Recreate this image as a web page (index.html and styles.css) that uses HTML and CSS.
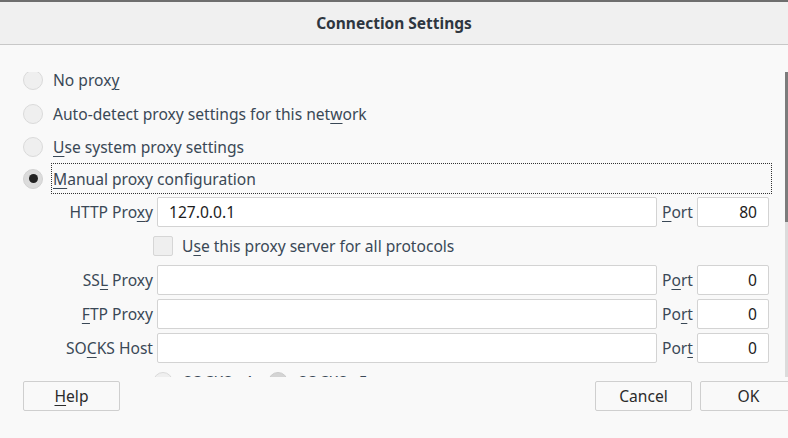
FILE: index.html
```html
<!DOCTYPE html>
<html>
<head>
<meta charset="utf-8">
<link rel="stylesheet" href="styles.css">
</head>
<body>
<div class="dialog">
  <header class="titlebar">Connection Settings</header>
  <div class="body">
    <div class="viewport">
      <div class="inner">
        <div class="radio-row r1"><span class="radio"></span><span class="lbl">No prox<u>y</u></span></div>
        <div class="radio-row r2"><span class="radio"></span><span class="lbl">Auto-detect proxy settings for this net<u>w</u>ork</span></div>
        <div class="radio-row r3"><span class="radio"></span><span class="lbl"><u>U</u>se system proxy settings</span></div>
        <div class="radio-row r4"><span class="radio checked"></span><span class="lbl focus"><u>M</u>anual proxy configuration</span></div>

        <div class="proxies">
          <div class="prow">
            <span class="plabel">HTTP Pro<u>x</u>y</span>
            <span class="field">127.0.0.1</span>
            <span class="portlbl"><u>P</u>ort</span>
            <span class="field port">80</span>
          </div>
          <div class="check-row">
            <span class="checkbox"></span>
            <span class="lbl">U<u>s</u>e this proxy server for all protocols</span>
          </div>
          <div class="prow">
            <span class="plabel">SS<u>L</u> Proxy</span>
            <span class="field"></span>
            <span class="portlbl">P<u>o</u>rt</span>
            <span class="field port">0</span>
          </div>
          <div class="prow">
            <span class="plabel"><u>F</u>TP Proxy</span>
            <span class="field"></span>
            <span class="portlbl">Po<u>r</u>t</span>
            <span class="field port">0</span>
          </div>
          <div class="prow">
            <span class="plabel">SO<u>C</u>KS Host</span>
            <span class="field"></span>
            <span class="portlbl">Por<u>t</u></span>
            <span class="field port">0</span>
          </div>
          <div class="socks-row">
            <span class="radio small"></span><span class="lbl">SOCKS v<u>4</u></span>
            <span class="radio small dark"></span><span class="lbl">SOCKS <u>v</u>5</span>
          </div>
        </div>
      </div>
      <div class="scrollbar"><div class="thumb"></div></div>
    </div>
    <div class="buttons">
      <button class="btn"><u>H</u>elp</button>
      <div class="right">
        <button class="btn">Cancel</button>
        <button class="btn">OK</button>
      </div>
    </div>
  </div>
</div>
</body>
</html>
```
FILE: styles.css
```css
html, body {
  margin: 0;
  padding: 0;
  width: 788px;
  height: 438px;
  overflow: hidden;
  background: #f9f9f9;
}
body {
  font-family: "Noto Sans", "DejaVu Sans", sans-serif;
  font-size: 15.6px;
  color: #3a4856;
}
u {
  text-decoration-thickness: 1px;
  text-underline-offset: 3px;
}
.dialog {
  width: 788px;
  height: 438px;
}
.titlebar {
  height: 42px;
  border-top: 2px solid #6e6e6e;
  border-bottom: 1px solid #c8c8c8;
  background: #f0f0f0;
  display: flex;
  align-items: center;
  justify-content: center;
  font-weight: bold;
  font-size: 15.5px;
  color: #2e3640;
}
.body {
  padding-top: 27px;
}
.viewport {
  position: relative;
  height: 305px;
  overflow: hidden;
}
.inner {
  margin-top: -9px;
}
.radio-row {
  display: flex;
  align-items: center;
  padding-left: 23px;
}
.r1 { height: 34px; }
.r2 { height: 33px; }
.r3 { height: 33px; }
.r4 { height: 31px; }
.radio {
  width: 18px;
  height: 18px;
  border-radius: 50%;
  border: 1px solid #dadada;
  background: #efefef;
  flex: none;
  margin-right: 10px;
  display: flex;
  align-items: center;
  justify-content: center;
}
.radio.checked {
  background: #dcdcdc;
  border-color: #d2d2d2;
}
.radio.checked::after {
  content: "";
  width: 9px;
  height: 9px;
  border-radius: 50%;
  background: #222;
}
.radio-row .lbl {
  white-space: nowrap;
  line-height: 16px;
}
.lbl.focus {
  flex: 1;
  margin-left: -2px;
  margin-right: 16px;
  height: 29px;
  border: 1px dotted #333;
  padding-left: 1px;
  display: flex;
  align-items: center;
}
.proxies {
  margin-top: 3px;
  display: flex;
  flex-direction: column;
  gap: 4px;
}
.prow {
  display: flex;
  align-items: center;
  padding-left: 53px;
  height: 30px;
}
.plabel {
  width: 100px;
  text-align: right;
  margin-right: 4px;
  white-space: nowrap;
}
.field {
  box-sizing: border-box;
  width: 500px;
  height: 30px;
  border: 1px solid #d3d3d3;
  border-radius: 2px;
  background: #fff;
  color: #1c1c1c;
  padding: 0 11px;
  display: flex;
  align-items: center;
}
.portlbl {
  width: 35px;
  margin-left: 5px;
  white-space: nowrap;
}
.field.port {
  width: 72px;
  justify-content: flex-end;
}
.check-row {
  display: flex;
  align-items: center;
  height: 20px;
  margin: 5px 0;
  padding-left: 153px;
}
.checkbox {
  box-sizing: border-box;
  width: 20px;
  height: 20px;
  border: 1px solid #d6d6d6;
  border-radius: 2px;
  background: #efefef;
  margin-right: 9px;
}
.socks-row {
  display: flex;
  align-items: center;
  height: 20px;
  margin-top: 5px;
  padding-left: 153px;
}
.radio.small {
  margin-right: 10px;
}
.radio.dark {
  background: #d4d4d4;
  border-color: #cccccc;
}
.socks-row .lbl {
  width: 85px;
}
.scrollbar {
  position: absolute;
  right: 0;
  top: 0;
  width: 3px;
  height: 100%;
  background: #dcdcdc;
}
.thumb {
  width: 3px;
  height: 150px;
  background: #7c7c7c;
}
.buttons {
  margin-top: 4px;
  margin-right: -9px;
  padding-left: 23px;
  display: flex;
  justify-content: space-between;
}
.right {
  display: flex;
  gap: 8px;
}
.btn {
  box-sizing: border-box;
  width: 97px;
  height: 30px;
  border: 1px solid #cfcfcf;
  border-radius: 2px;
  background: #f9f9f9;
  font-family: "Noto Sans", "DejaVu Sans", sans-serif;
  font-size: 15.6px;
  color: #2b2b2b;
  padding: 0;
}
```
